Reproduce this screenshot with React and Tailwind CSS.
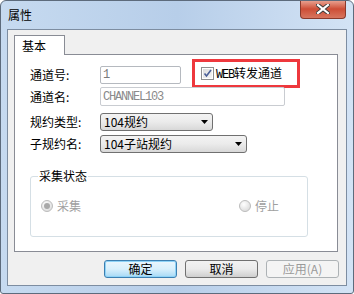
import React from 'react';

const cjk = { fontFamily: '"Noto Sans CJK SC", "Noto Sans", sans-serif' };
const mono = { fontFamily: '"Liberation Mono", monospace' };

const Caret = () => (
  <svg width="7" height="4" viewBox="0 0 7 4">
    <polygon points="0,0 7,0 3.5,4" fill="#000" />
  </svg>
);

const Radio = ({ checked }) => (
  <svg width="12" height="12" viewBox="0 0 12 12">
    <defs>
      <radialGradient id={checked ? 'rg1' : 'rg2'} cx="0.4" cy="0.35" r="0.7">
        <stop offset="0" stopColor="#ffffff" />
        <stop offset="1" stopColor="#d9d9d9" />
      </radialGradient>
    </defs>
    <circle cx="6" cy="6" r="5.5" fill={`url(#${checked ? 'rg1' : 'rg2'})`} stroke="#bcbcbc" />
    {checked && <circle cx="6" cy="6" r="3" fill="#a8a8a8" />}
  </svg>
);

const Field = ({ label, children, className = '' }) => (
  <div className={`flex items-center ${className}`}>
    <span className="w-[70px] text-[12px] leading-[16px] text-black" style={cjk}>
      {label}
    </span>
    {children}
  </div>
);

const Select = ({ value, width }) => (
  <div
    className={`${width} h-[18px] flex items-center justify-between pl-[3px] pr-[4px] rounded-[3px] border border-[#707070] bg-gradient-to-b from-[#f3f3f3] via-[#ebebeb] to-[#d8d8d8] text-[12px] leading-[14px] text-black`}
    style={cjk}
  >
    <span>{value}</span>
    <Caret />
  </div>
);

const Button = ({ children, variant = 'normal' }) => {
  const styles = {
    primary: 'border-[#3c7fb1] bg-gradient-to-b from-[#eaf6fd] via-[#d9f0fc] to-[#a7d9f5] shadow-[inset_0_0_0_1px_#8fd3f7] text-black',
    normal: 'border-[#707070] bg-gradient-to-b from-[#f2f2f2] via-[#ebebeb] to-[#cfcfcf] text-black',
    disabled: 'border-[#adb2b5] bg-[#f4f4f4] text-[#9a9a9a]',
  };
  return (
    <div
      className={`w-[73px] h-[18px] flex items-center justify-center rounded-[3px] border text-[12px] leading-[14px] ${styles[variant]}`}
      style={cjk}
    >
      {children}
    </div>
  );
};

export default function App() {
  return (
    <div className="relative w-[354px] h-[294px] flex flex-col rounded-t-[6px] rounded-b-[3px] border border-[#5d6b7c] bg-gradient-to-r from-[#c6daf0] via-[#b7cee9] to-[#d3e3f5] overflow-hidden">
      <div className="h-[28px] pl-[7px] flex items-center text-[12px] text-black" style={cjk}>
        属性
      </div>

      <div className="absolute top-[-1px] right-[7px] w-[46px] h-[19px] flex items-center justify-center rounded-b-[4px] border border-t-0 border-[#8a3a2c] bg-gradient-to-b from-[#e9a898] via-[#cd4d36] to-[#d7755f]">
        <svg width="14" height="10" viewBox="0 0 14 10">
          <path d="M2 1 L12 9 M12 1 L2 9" stroke="#3b3b3b" strokeWidth="4" strokeLinecap="square" />
          <path d="M2 1 L12 9 M12 1 L2 9" stroke="#ffffff" strokeWidth="2.2" strokeLinecap="square" />
        </svg>
      </div>

      <div className="mx-[6px] h-[257px] flex flex-col border border-[#7d8da1] bg-[#f0f0f0]">
        <div className="pt-[5px] pl-[6px] flex">
          <div
            className="relative z-10 w-[51px] h-[20px] -mb-[1px] pl-[7px] pt-[3px] border border-b-0 border-[#898c95] bg-white text-[12px] leading-[14px] text-black"
            style={cjk}
          >
            基本
          </div>
        </div>

        <div className="ml-[6px] w-[324px] h-[198px] pl-[15px] border border-[#898c95] bg-white flex flex-col">
          <div className="mt-[4px] flex items-start">
            <Field label="通道号:" className="mt-[7px]">
              <div
                className="w-[81px] h-[18px] pl-[2px] flex items-center rounded-[2px] border border-[#b5b9bf] bg-white text-[12px] tracking-[-1.2px] text-[#7a7a7a]"
                style={mono}
              >
                1
              </div>
            </Field>
            <div className="ml-[11px] w-[108px] h-[29px] -mb-[4px] pl-[6px] flex items-center border-[3px] border-[#ee383d]">
              <svg width="13" height="13" viewBox="0 0 13 13">
                <defs>
                  <linearGradient id="cb" x1="0" y1="0" x2="1" y2="1">
                    <stop offset="0" stopColor="#dcdcdc" />
                    <stop offset="1" stopColor="#f6f6f6" />
                  </linearGradient>
                </defs>
                <rect x="0.5" y="0.5" width="12" height="12" fill="#fff" stroke="#8e8f8f" />
                <rect x="2" y="2" width="9" height="9" fill="url(#cb)" />
                <path d="M3.5 6.5 L5.5 9 L10 3" stroke="#4a5f97" strokeWidth="1.6" fill="none" />
              </svg>
              <span className="ml-[2px] text-[12px] leading-[14px] text-black" style={cjk}>
                <span className="text-[12px] tracking-[-1.2px]" style={mono}>
                  WEB
                </span>
                转发通道
              </span>
            </div>
          </div>

          <Field label="通道名:" className="mt-[3px]">
            <div
              className="w-[185px] h-[19px] pl-[2px] flex items-center rounded-[2px] border border-[#c9ccd1] bg-white text-[12px] tracking-[-1.2px] text-[#8a8a8a]"
              style={mono}
            >
              CHANNEL103
            </div>
          </Field>

          <Field label="规约类型:" className="mt-[7px]">
            <Select value="104规约" width="w-[113px]" />
          </Field>

          <Field label="子规约名:" className="mt-[4px]">
            <Select value="104子站规约" width="w-[147px]" />
          </Field>

          <div className="mt-[23px] w-[278px] h-[61px] px-[8px] rounded-[3px] border border-[#d5dfe5] flex flex-col">
            <span
              className="-mt-[9px] -ml-[1px] w-fit px-[1px] bg-white text-[12px] leading-[16px] text-black"
              style={cjk}
            >
              采集状态
            </span>
            <div className="mt-[14px] flex items-center text-[12px] leading-[16px] text-[#a0a0a0]" style={cjk}>
              <div className="ml-[2px] flex items-center gap-[4px]">
                <Radio checked />
                <span>采集</span>
              </div>
              <div className="ml-[158px] flex items-center gap-[4px]">
                <Radio />
                <span>停止</span>
              </div>
            </div>
          </div>
        </div>

        <div className="mt-[8px] pr-[7px] flex justify-end gap-[8px]">
          <Button variant="primary">确定</Button>
          <Button>取消</Button>
          <Button variant="disabled">应用(A)</Button>
        </div>
      </div>
    </div>
  );
}
